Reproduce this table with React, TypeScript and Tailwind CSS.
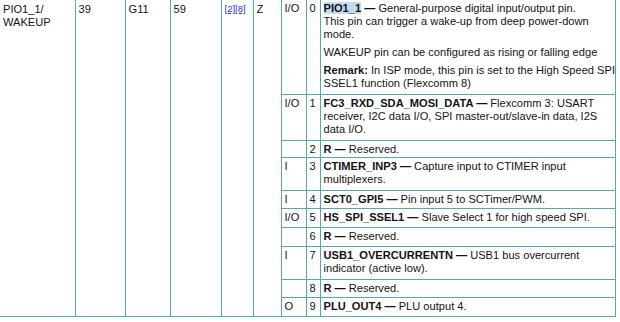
import React from 'react'

type Row = {
  type: string
  num: string
  h: string
  body: React.ReactNode
}

const line = 'border-[#5aa6b6]'
const cell = `border-r border-b ${line} align-top pl-[3px] pt-[2px] pb-0`

const rows: Row[] = [
  {
    type: 'I/O',
    num: '0',
    h: 'h-[94px]',
    body: (
      <>
        <p>
          <b className="bg-[#c2dbf1]">PIO1_1</b> <b>—</b> General-purpose digital input/output pin.
          <br />
          This pin can trigger a wake-up from deep power-down
          <br />
          mode.
        </p>
        <p className="mt-[5px]">WAKEUP pin can be configured as rising or falling edge</p>
        <p className="mt-[5px]">
          <b>Remark:</b> In ISP mode, this pin is set to the High Speed SPI
          <br />
          SSEL1 function (Flexcomm 8)
        </p>
      </>
    ),
  },
  {
    type: 'I/O',
    num: '1',
    h: 'h-[46.5px]',
    body: (
      <p>
        <b>FC3_RXD_SDA_MOSI_DATA —</b> Flexcomm 3: USART
        <br />
        receiver, I2C data I/O, SPI master-out/slave-in data, I2S
        <br />
        data I/O.
      </p>
    ),
  },
  { type: '', num: '2', h: 'h-[16.5px]', body: <p><b>R —</b> Reserved.</p> },
  {
    type: 'I',
    num: '3',
    h: 'h-[33.5px]',
    body: (
      <p>
        <b>CTIMER_INP3 —</b> Capture input to CTIMER input
        <br />
        multiplexers.
      </p>
    ),
  },
  { type: 'I', num: '4', h: 'h-[17.5px]', body: <p><b>SCT0_GPI5 —</b> Pin input 5 to SCTimer/PWM.</p> },
  { type: 'I/O', num: '5', h: 'h-[19px]', body: <p><b>HS_SPI_SSEL1 —</b> Slave Select 1 for high speed SPI.</p> },
  { type: '', num: '6', h: 'h-[19.5px]', body: <p><b>R —</b> Reserved.</p> },
  {
    type: 'I',
    num: '7',
    h: 'h-[32.5px]',
    body: (
      <p>
        <b>USB1_OVERCURRENTN —</b> USB1 bus overcurrent
        <br />
        indicator (active low).
      </p>
    ),
  },
  { type: '', num: '8', h: 'h-[18px]', body: <p><b>R —</b> Reserved.</p> },
  { type: 'O', num: '9', h: 'h-[19px]', body: <p><b>PLU_OUT4 —</b> PLU output 4.</p> },
]

export default function App() {
  return (
    <div className="w-[620px] h-[322px] bg-white overflow-hidden text-[#141414] text-[11.1px] leading-[13px] font-['Liberation_Sans',Arial,sans-serif]">
      <table className="table-fixed border-collapse w-[616px]">
        <colgroup>
          <col className="w-[75px]" />
          <col className="w-[50px]" />
          <col className="w-[45px]" />
          <col className="w-[51px]" />
          <col className="w-[32px]" />
          <col className="w-[28px]" />
          <col className="w-[25px]" />
          <col className="w-[14px]" />
          <col />
        </colgroup>
        <tbody>
          {rows.map((r, i) => (
            <tr key={r.num} className={r.h}>
              {i === 0 && (
                <>
                  <td rowSpan={rows.length} className={`${cell} pl-[2px] pt-[3px]`}>
                    PIO1_1/
                    <br />
                    WAKEUP
                  </td>
                  <td rowSpan={rows.length} className={`${cell} pt-[3px]`}>39</td>
                  <td rowSpan={rows.length} className={`${cell} pt-[3px]`}>G11</td>
                  <td rowSpan={rows.length} className={`${cell} pt-[3px]`}>59</td>
                  <td rowSpan={rows.length} className={`${cell} pl-[2px]`}>
                    <span className="text-[9.5px] leading-[10px] text-[#2a33e0] underline">[2]</span>
                    <span className="text-[9.5px] leading-[10px] text-[#2a33e0] underline">[8]</span>
                  </td>
                  <td rowSpan={rows.length} className={`${cell} pt-[3px]`}>Z</td>
                </>
              )}
              <td className={cell}>{r.type}</td>
              <td className={cell}>{r.num}</td>
              <td className={`${cell} whitespace-nowrap`}>{r.body}</td>
            </tr>
          ))}
        </tbody>
      </table>
    </div>
  )
}
